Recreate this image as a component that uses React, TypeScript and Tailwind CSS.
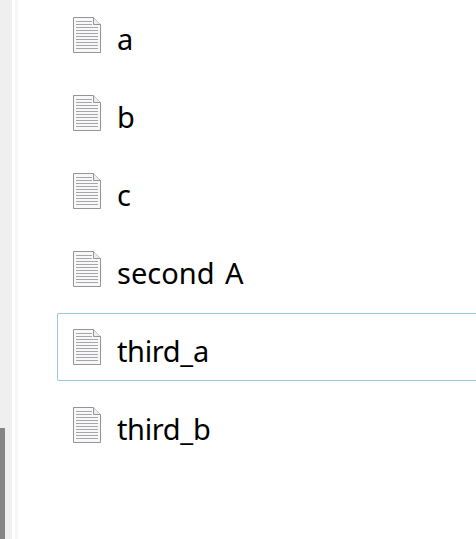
const files = [
  { name: 'a' },
  { name: 'b' },
  { name: 'c' },
  { name: 'second A' },
  { name: 'third_a', focused: true },
  { name: 'third_b' },
]

const textLines = [7.5, 10.5, 13.5, 16.5, 19.5, 22.5, 25.5, 28.5, 31.5]

function FileIcon() {
  return (
    <svg width="28" height="36" viewBox="0 0 28 36" fill="none" className="shrink-0">
      <path d="M0.5 0.5H20.5L27.5 7.5V35.5H0.5Z" fill="#f8f8f8" stroke="#959595" />
      <path d="M20.5 0.5V7.5H27.5" fill="#ededed" stroke="#959595" />
      <path d="M3 4.5H19" stroke="#a6a6ac" />
      {textLines.map((y) => (
        <path key={y} d={`M3 ${y}H${y < 9 ? 19 : 25}`} stroke="#a6a6ac" />
      ))}
    </svg>
  )
}

export default function App() {
  return (
    <div className="flex h-[539px] w-[476px] overflow-hidden bg-white font-['Noto_Sans','Open_Sans',sans-serif] text-black">
      {/* Scrollbar */}
      <div className="flex w-3 shrink-0 flex-col justify-end bg-[#efefef]">
        <div className="h-[111px] w-[5px] bg-[#858585]"></div>
      </div>
      <div className="ml-[3px] w-[3px] shrink-0 bg-[#f7f7f7]"></div>

      {/* File list */}
      <ul className="ml-[39px] flex flex-1 flex-col gap-[10px] pt-px">
        {files.map((file) => (
          <li
            key={file.name}
            className={`flex h-[68px] shrink-0 items-start gap-4 rounded-l-[2px] border border-r-0 pt-[15px] pl-[15px] ${
              file.focused ? 'border-[#99cbe0]' : 'border-transparent'
            }`}
          >
            <FileIcon />
            <span
              className={`mt-[2px] text-[29px] leading-10 [word-spacing:3px] whitespace-pre ${
                file.name.includes('_') ? 'tracking-[-0.35px]' : ''
              }`}
            >
              {file.name}
            </span>
          </li>
        ))}
      </ul>
    </div>
  )
}
